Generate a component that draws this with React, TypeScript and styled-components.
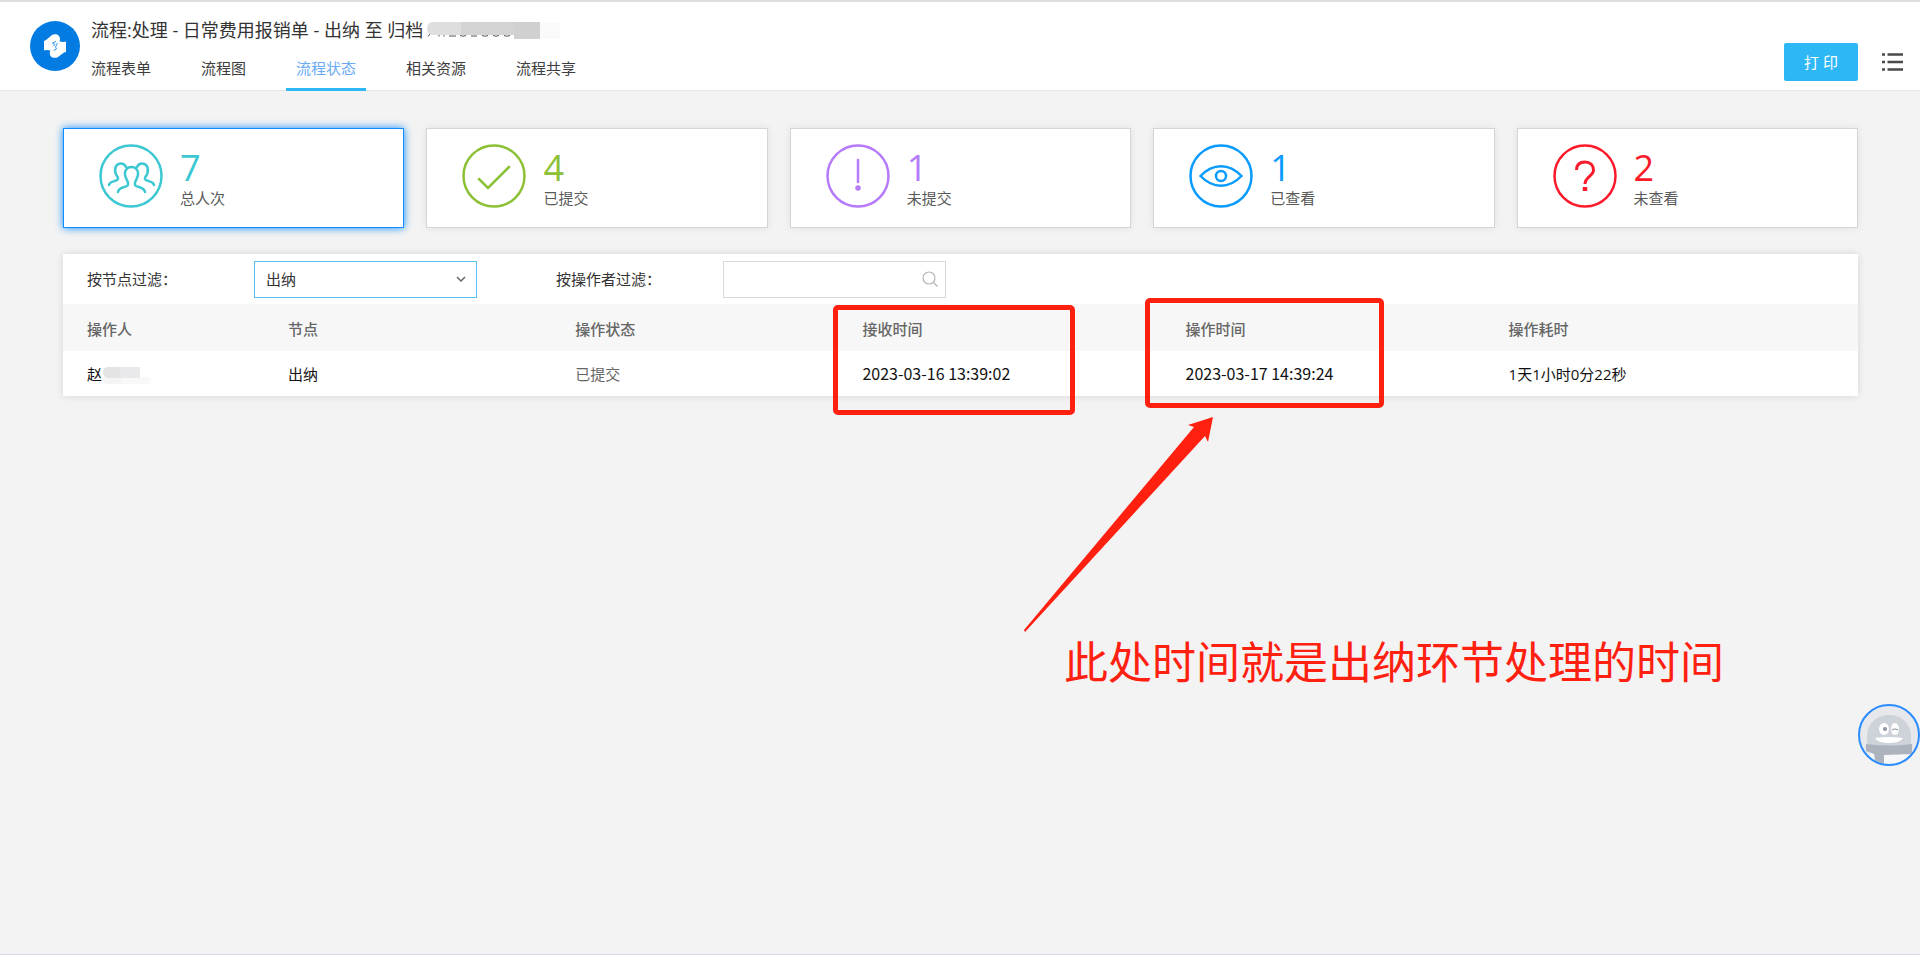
import React from "react";
import styled, { createGlobalStyle } from "styled-components";

const GlobalStyle = createGlobalStyle`
  * { box-sizing: border-box; }
  body {
    margin: 0;
    background: #f3f3f3;
    color: #333;
    font-family: "Open Sans", "Noto Sans CJK SC", sans-serif;
    font-size: 15px;
    line-height: 20px;
  }
  button, input, select { font: inherit; color: inherit; }
`;

const Page = styled.div`
  position: relative;
  min-height: 100vh;
  border-bottom: 1px solid #d3dbe8;
  overflow: hidden;
`;

const Header = styled.header`
  display: flex;
  align-items: flex-start;
  height: 91px;
  padding-left: 30px;
  padding-right: 16px;
  background: #fff;
  border-top: 2px solid #dedede;
  border-bottom: 1px solid #e6e6e6;
`;

const Logo = styled.svg`
  flex: none;
  width: 50px;
  height: 50px;
  margin-top: 19px;
`;

const Heading = styled.div`
  flex: 1;
  min-width: 0;
  padding-top: 16px;
`;

const Title = styled.h1`
  display: flex;
  align-items: center;
  gap: 4px;
  margin: 0;
  padding-left: 11px;
  font-size: 18px;
  font-weight: 400;
  line-height: 24px;
  white-space: nowrap;
`;

const Tabs = styled.nav`
  display: flex;
  gap: 30px;
  padding-left: 1px;
`;

const Tab = styled.a<{ $active?: boolean }>`
  height: 49px;
  padding: 16px 10px 0;
  border-bottom: 3px solid ${(p) => (p.$active ? "#2db7f5" : "transparent")};
  color: ${(p) => (p.$active ? "#6aaaf5" : "#3d3d3d")};
  text-decoration: none;
  white-space: nowrap;
`;

const Actions = styled.div`
  display: flex;
  align-items: center;
  gap: 24px;
  margin-top: 41px;
`;

const PrintButton = styled.button`
  width: 74px;
  height: 38px;
  padding: 0;
  border: 0;
  border-radius: 2px;
  background: #2db7f5;
  color: #fff;
`;

const MenuButton = styled.button`
  display: flex;
  padding: 0;
  border: 0;
  background: none;
`;

const Main = styled.main`
  padding: 37px 62px 0 63px;
`;

const Stats = styled.section`
  display: grid;
  grid-template-columns: repeat(5, 1fr);
  gap: 22px;
`;

const Card = styled.button<{ $active?: boolean }>`
  display: flex;
  align-items: flex-start;
  gap: 17px;
  height: 100px;
  padding: 15px 35px 0;
  border: 1px solid ${(p) => (p.$active ? "#108cff" : "#d5d5d5")};
  background: #fff;
  box-shadow: ${(p) => (p.$active ? "0 0 8px #108cff" : "0 0 8px rgba(0, 0, 0, 0.08)")};
  text-align: left;
`;

const StatText = styled.span`
  display: flex;
  flex-direction: column;
  padding-top: 4px;
`;

const StatNumber = styled.span<{ $color: string }>`
  color: ${(p) => p.$color};
  font-size: 36px;
  line-height: 40px;
`;

const StatLabel = styled.span`
  color: #5a5a5a;
`;

const Panel = styled.section`
  margin-top: 26px;
  background: #fff;
  box-shadow: 0 0 8px rgba(0, 0, 0, 0.12);
`;

const Filters = styled.form`
  display: flex;
  align-items: center;
  height: 50px;
  padding: 0 24px;
`;

const FilterLabel = styled.label`
  width: 167px;
`;

const Field = styled.div<{ $focused?: boolean }>`
  display: flex;
  align-items: center;
  position: relative;
  width: 223px;
  height: 37px;
  margin-right: 79px;
  border: 1px solid ${(p) => (p.$focused ? "#57c1f0" : "#d9d9d9")};
`;

const Select = styled.select`
  width: 100%;
  height: 100%;
  padding: 0 11px;
  border: 0;
  outline: 0;
  background: transparent;
  appearance: none;
`;

const Input = styled.input`
  width: 100%;
  height: 100%;
  padding: 0 36px 0 11px;
  border: 0;
  outline: 0;
  background: transparent;
`;

const FieldIcon = styled.svg`
  position: absolute;
  right: 7px;
  top: 9px;
  pointer-events: none;
`;

const Table = styled.table`
  width: 100%;
  border-collapse: collapse;
  table-layout: fixed;
`;

const Th = styled.th<{ $width: string }>`
  width: ${(p) => p.$width};
  height: 47px;
  padding: 2px 24px 0;
  background: #f7f7f7;
  color: #666;
  font-weight: 500;
  text-align: left;
`;

const Td = styled.td<{ $muted?: boolean }>`
  height: 45px;
  padding: 0 24px;
  color: ${(p) => (p.$muted ? "#666" : "#111")};
  white-space: nowrap;
`;

const Person = styled.span`
  display: flex;
  align-items: center;
`;

const Time = styled.time`
  font-family: "Noto Sans CJK SC", sans-serif;
  font-size: 16px;
`;

const Marker = styled.div<{ $left: number; $top: number; $width: number }>`
  position: absolute;
  left: ${(p) => p.$left}px;
  top: ${(p) => p.$top}px;
  width: ${(p) => p.$width}px;
  height: 110px;
  border: 5px solid #ff2010;
  border-radius: 5px;
  pointer-events: none;
`;

const Arrow = styled.svg`
  position: absolute;
  left: 1020px;
  top: 415px;
`;

const Note = styled.p`
  position: absolute;
  left: 1064px;
  top: 630px;
  margin: 0;
  color: #ff2010;
  font-size: 44px;
  line-height: 64px;
  white-space: nowrap;
`;

const Assistant = styled.button`
  position: absolute;
  right: 0;
  top: 704px;
  width: 62px;
  height: 62px;
  padding: 0;
  border: 0;
  background: none;
`;

const glyphs: Record<string, React.ReactNode> = {
  people: (
    <>
      <path d="M19 48 C20 43 24 44 28 42 C31 40 28 37 27 34 C24 27 28 23 32.500 23 C37 23 41 27 38 34 C37 37 34 40 37 42 C41 44 45 43 46 48" />
      <path d="M10 41 C11 37 15 38 18 36 C21 34 17 32 16.500 29 C15 23 18 19.500 22 19.500 C24.500 19.500 26 21 27 23" />
      <path d="M55 41 C54 37 50 38 47 36 C44 34 48 32 48.500 29 C50 23 47 19.500 43 19.500 C40.500 19.500 39 21 38 23" />
    </>
  ),
  check: <path d="M17 35 L26 44 L47 23" />,
  exclaim: (
    <>
      <path d="M32 16 V38" />
      <circle cx="32" cy="44" r="1.500" />
    </>
  ),
  eye: (
    <>
      <path d="M11.500 32 C24 19 40 19 52.500 32 C40 45 24 45 11.500 32 Z" />
      <circle cx="32" cy="32" r="5" />
    </>
  ),
  question: (
    <>
      <path d="M23.500 26 C23.500 20 27 18 32 18 C37 18 40.500 21 40.500 26 C40.500 32 32 33 32 40" strokeWidth="3" strokeLinecap="butt" />
      <path d="M32 43 V47" strokeWidth="4.500" strokeLinecap="butt" />
    </>
  ),
};

const stats = [
  { icon: "people", color: "#3cc8d2", count: 7, label: "总人次" },
  { icon: "check", color: "#8cc035", count: 4, label: "已提交" },
  { icon: "exclaim", color: "#b57bfa", count: 1, label: "未提交" },
  { icon: "eye", color: "#0a9bff", count: 1, label: "已查看" },
  { icon: "question", color: "#fc1a2a", count: 2, label: "未查看" },
];

const tabs = ["流程表单", "流程图", "流程状态", "相关资源", "流程共享"];

const columns = [
  { title: "操作人", width: "11.2%" },
  { title: "节点", width: "16%" },
  { title: "操作状态", width: "16%" },
  { title: "接收时间", width: "18%" },
  { title: "操作时间", width: "18%" },
  { title: "操作耗时", width: "20.8%" },
];

function StatIcon({ name, color }: { name: string; color: string }) {
  return (
    <svg width="64" height="64" viewBox="0 0 64 64" fill="none" stroke={color} strokeWidth="2.500" strokeLinecap="round">
      <circle cx="32" cy="32" r="30.500" />
      {glyphs[name]}
    </svg>
  );
}

export default function App() {
  return (
    <Page>
      <GlobalStyle />
      <Header>
        <Logo viewBox="0 0 50 50" aria-hidden="true">
          <circle cx="25" cy="25" r="25" fill="#027be3" />
          <path
            d="M14 20 L16 19 L22 14 C24 12.500 28 13 29 15 C30.500 17 30 19 29.500 20.500 L34 21 L36 20.500 V31 L34 31.500 L28 36 C26 37.500 22 37 20.500 35 C19.500 33 19.500 31 20.500 29.500 L16 29 L14 29.500 Z"
            fill="#fff"
          />
          <path d="M26 20.500 L22.500 22 L25 23.500 L23 25.500 M27.500 22 L25.500 26 L26.500 28 L23.500 29.500" fill="none" stroke="#027be3" strokeWidth="0.800" />
        </Logo>
        <Heading>
          <Title>
            流程:处理 - 日常费用报销单 - 出纳 至 归档
            <svg width="133" height="17" aria-hidden="true">
              <path d="M1 14.500 L3 12 M12 14.500 V12 M17 14.500 V12 M22 14 H29 M33 13.500 Q36 15 39 13.500 M44 14 H50 M55 13.500 Q58 15 61 13.500 M66 13.500 Q69 15 72 13.500 M77 13.500 Q80 15 83 13.500" stroke="#555" strokeWidth="1" fill="none" />
              <rect x="0" y="0" width="60" height="13" rx="6" fill="#dedede" />
              <rect x="34" y="0" width="53" height="13" fill="#d4d4d4" />
              <rect x="87" y="0" width="26" height="17" fill="#d0d0d0" />
              <rect x="113" y="1" width="20" height="16" rx="3" fill="#fafafa" />
            </svg>
          </Title>
          <Tabs>
            {tabs.map((tab) => (
              <Tab key={tab} href="#" $active={tab === "流程状态"}>
                {tab}
              </Tab>
            ))}
          </Tabs>
        </Heading>
        <Actions>
          <PrintButton type="button">打 印</PrintButton>
          <MenuButton type="button" aria-label="菜单">
            <svg width="22" height="20" viewBox="0 0 22 20" stroke="#4a4a4a" strokeWidth="2.500">
              <path d="M0 2.500 H3 M5.500 2.500 H21 M0 10 H3 M5.500 10 H21 M0 17.500 H3 M5.500 17.500 H21" />
            </svg>
          </MenuButton>
        </Actions>
      </Header>

      <Main>
        <Stats>
          {stats.map((s, i) => (
            <Card key={s.label} type="button" $active={i === 0}>
              <StatIcon name={s.icon} color={s.color} />
              <StatText>
                <StatNumber $color={s.color}>{s.count}</StatNumber>
                <StatLabel>{s.label}</StatLabel>
              </StatText>
            </Card>
          ))}
        </Stats>

        <Panel>
          <Filters>
            <FilterLabel htmlFor="node">按节点过滤：</FilterLabel>
            <Field $focused>
              <Select id="node" defaultValue="出纳">
                <option>出纳</option>
              </Select>
              <FieldIcon width="16" height="16" viewBox="0 0 16 16" fill="none" stroke="#666" strokeWidth="1.500">
                <path d="M4 6 L8 10 L12 6" />
              </FieldIcon>
            </Field>
            <FilterLabel htmlFor="operator">按操作者过滤：</FilterLabel>
            <Field>
              <Input id="operator" type="text" />
              <FieldIcon width="16" height="16" viewBox="0 0 16 16" fill="none" stroke="#b5b5b5" strokeWidth="1.200">
                <circle cx="7" cy="7" r="6" />
                <path d="M11.500 11.500 L15.500 15.500" />
              </FieldIcon>
            </Field>
          </Filters>
          <Table>
            <thead>
              <tr>
                {columns.map((c) => (
                  <Th key={c.title} scope="col" $width={c.width}>
                    {c.title}
                  </Th>
                ))}
              </tr>
            </thead>
            <tbody>
              <tr>
                <Td>
                  <Person>
                    赵
                    <svg width="50" height="20" aria-hidden="true">
                      <rect x="1" y="13" width="40" height="7" rx="4" fill="#f5f5f5" />
                      <rect x="20" y="13" width="29" height="7" rx="4" fill="#f8f8f8" />
                      <rect x="1" y="3" width="30" height="11" rx="5" fill="#e4e4e4" />
                      <rect x="18" y="3" width="20" height="11" fill="#e9e9eb" />
                    </svg>
                  </Person>
                </Td>
                <Td>出纳</Td>
                <Td $muted>已提交</Td>
                <Td>
                  <Time>2023-03-16 13:39:02</Time>
                </Td>
                <Td>
                  <Time>2023-03-17 14:39:24</Time>
                </Td>
                <Td>1天1小时0分22秒</Td>
              </tr>
            </tbody>
          </Table>
        </Panel>
      </Main>

      <Marker $left={833} $top={305} $width={242} />
      <Marker $left={1145} $top={298} $width={239} />
      <Arrow width="200" height="220" aria-hidden="true">
        <path d="M193 2 L168 10 L174 12 L4 215 L5 217 L185 21 L188 27 Z" fill="#ff2010" />
      </Arrow>
      <Note>此处时间就是出纳环节处理的时间</Note>

      <Assistant type="button" aria-label="助手">
        <svg width="62" height="62" viewBox="0 0 62 62">
          <defs>
            <clipPath id="face">
              <circle cx="31" cy="31" r="29" />
            </clipPath>
          </defs>
          <circle cx="31" cy="31" r="30" fill="#e6e8ec" />
          <g clipPath="url(#face)">
            <path d="M9 42 V33 C9 19 19 11 31 11 C43 11 53 19 53 33 V42 Z" fill="#ced2d9" />
            <rect x="12" y="47" width="38" height="15" fill="#f6f7f8" />
            <path d="M8 40 Q31 43 54 40 L54 50 L26 51 L26 62 L18 62 L16 50 L8 47 Z" fill="#acb3bd" />
            <ellipse cx="26" cy="25" rx="5" ry="6" fill="#fff" />
            <ellipse cx="37" cy="25" rx="4" ry="6" fill="#fff" />
            <circle cx="27" cy="25" r="2" fill="#8b95a3" />
            <path d="M34 26 Q37 24 40 26" stroke="#8b95a3" strokeWidth="1.200" fill="none" />
            <path d="M17 34 Q31 32 45 34 Q42 39 31 39 Q20 39 17 34 Z" fill="#fff" />
          </g>
          <circle cx="31" cy="31" r="30" fill="none" stroke="#2a8cff" strokeWidth="2" />
        </svg>
      </Assistant>
    </Page>
  );
}
